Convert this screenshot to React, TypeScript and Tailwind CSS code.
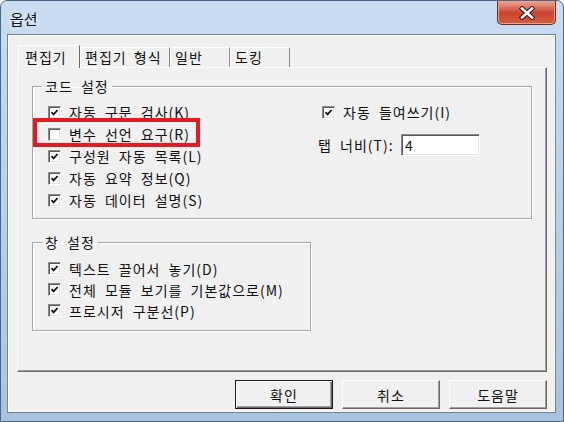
import type { ReactNode } from 'react'

const font = "font-['Noto_Sans_CJK_KR','Noto_Sans',sans-serif]"

function Check({ checked }: { checked: boolean }) {
  return (
    <span className="flex h-[13px] w-[13px] shrink-0 items-center justify-center border border-t-[#8a8a8a] border-l-[#8a8a8a] border-b-white border-r-white bg-white shadow-[inset_1px_1px_0_#5a5a5a,inset_-1px_-1px_0_#e3e3e3]">
      {checked && (
        <svg width="9" height="9" viewBox="0 0 9 9">
          <path d="M1.5 4.2 L3.6 6.4 L7.6 2" fill="none" stroke="#111" strokeWidth="1.8" />
        </svg>
      )}
    </span>
  )
}

function CheckRow({ label, checked = true, h = 'h-[22px]', children }: { label: string; checked?: boolean; h?: string; children?: ReactNode }) {
  return (
    <div className={`relative flex items-center gap-[8px] ${h}`}>
      <Check checked={checked} />
      <span className="text-[14px] leading-none tracking-[1px] text-[#111] [word-spacing:4px]">{label}</span>
      {children}
    </div>
  )
}

function Tab({ label, selected, w }: { label: string; selected?: boolean; w: string }) {
  if (selected) {
    return (
      <div className={`relative z-10 -mb-[1px] flex h-[23px] items-start border-l border-t border-r border-l-white border-t-white border-r-[#696969] bg-[#f0f0f0] pl-[6px] pt-[3px] ${w}`}>
        <span className="text-[14px] leading-[16px] tracking-[1px]">{label}</span>
      </div>
    )
  }
  return (
    <div className={`flex h-[20px] items-start border-l border-t border-r border-l-white border-t-white border-r-[#8a8a8a] pl-[4px] pt-[1px] ${w}`}>
      <span className="text-[14px] leading-[16px] tracking-[1px] [word-spacing:3px]">{label}</span>
    </div>
  )
}

function Button({ label, primary }: { label: string; primary?: boolean }) {
  return (
    <div
      className={`flex h-[29px] w-[98px] items-center justify-center border bg-[#f0f0f0] text-[14px] leading-none tracking-[1px] ${
        primary
          ? 'border-[#1a1a1a] shadow-[inset_1px_1px_0_#fff,inset_-1px_-1px_0_#696969,inset_-2px_-2px_0_#a0a0a0]'
          : 'border-t-white border-l-white border-r-[#696969] border-b-[#696969] shadow-[inset_-1px_-1px_0_#a0a0a0]'
      }`}
    >
      {label}
    </div>
  )
}

export default function App() {
  return (
    <div className={`${font} flex h-[422px] w-[564px] flex-col overflow-hidden rounded-t-[7px] border border-[#4f6786] bg-gradient-to-b from-[#c9dcf1] via-[#b9d0ea] to-[#a9c2de] text-[#111]`}>
      {/* title bar */}
      <div className="flex h-[33px] shrink-0 items-start justify-between pl-[9px] pr-[7px]">
        <span className="pt-[10px] text-[15px] leading-[16px] [text-shadow:0_0_6px_#fff]">옵션</span>
        <div className="flex h-[24px] w-[59px] items-center justify-center rounded-b-[5px] border border-t-0 border-[#6b2c22] bg-gradient-to-b from-[#e9a795] via-[#c9452f] to-[#d65c40] shadow-[inset_0_0_0_1px_#eba08c]">
          <svg width="18" height="14" viewBox="0 0 18 14">
            <path d="M4 2.5 L14 11.5 M14 2.5 L4 11.5" stroke="#3a1510" strokeWidth="4.6" strokeLinecap="square" />
            <path d="M4 2.5 L14 11.5 M14 2.5 L4 11.5" stroke="#fff" strokeWidth="2.6" strokeLinecap="square" />
          </svg>
        </div>
      </div>

      {/* client area */}
      <div className="ml-[6px] mr-[7px] flex h-[379px] flex-col border border-[#6c83a0] bg-[#f0f0f0] pl-[9px] pr-[8px] pt-[9px] shadow-[inset_0_0_0_1px_#fff]">
        {/* tabs */}
        <div className="flex h-[23px] items-end pl-[1px]">
          <Tab label="편집기" selected w="w-[62px]" />
          <Tab label="편집기 형식" w="w-[90px]" />
          <Tab label="일반" w="w-[60px]" />
          <Tab label="도킹" w="w-[60px]" />
        </div>

        {/* panel */}
        <div className="h-[305px] w-[530px] border border-t-white border-l-white border-r-[#696969] border-b-[#696969] pl-[14px] pt-[10px] shadow-[inset_-1px_-1px_0_#a0a0a0]">
          <fieldset className="h-[141px] w-[500px] border border-[#a6a6a6] pl-[15px] pt-[7px] shadow-[inset_1px_1px_0_#fff,1px_1px_0_#fff]">
            <legend className="ml-[-6px] px-[3px] text-[14px] leading-[16px] tracking-[1px] [word-spacing:4px]">코드 설정</legend>
            <div className="flex">
              <div className="w-[274px]">
                <CheckRow label="자동 구문 검사(K)" />
                <CheckRow label="변수 선언 요구(R)" checked={false}>
                  <span className="absolute left-[-15px] top-[-5px] h-[29px] w-[167px] border-4 border-[#e31b23]" />
                </CheckRow>
                <CheckRow label="구성원 자동 목록(L)" />
                <CheckRow label="자동 요약 정보(Q)" />
                <CheckRow label="자동 데이터 설명(S)" />
              </div>
              <div className="flex flex-col">
                <CheckRow label="자동 들여쓰기(I)" />
                <div className="-ml-[4px] mt-[11px] flex h-[22px] items-center">
                  <span className="w-[83px] text-[14px] leading-none tracking-[1px] [word-spacing:4px]">탭 너비(T):</span>
                  <div className="flex h-[22px] w-[79px] items-center border border-t-[#8a8a8a] border-l-[#8a8a8a] border-b-white border-r-white bg-white pl-[3px] text-[14px] leading-none shadow-[inset_1px_1px_0_#5a5a5a,inset_-1px_-1px_0_#e3e3e3]">
                    4
                  </div>
                </div>
              </div>
            </div>
          </fieldset>

          <fieldset className="mt-[15px] h-[97px] w-[279px] border border-[#a6a6a6] pl-[15px] pt-[8px] shadow-[inset_1px_1px_0_#fff,1px_1px_0_#fff]">
            <legend className="ml-[-6px] px-[3px] text-[14px] leading-[16px] tracking-[1px] [word-spacing:4px]">창 설정</legend>
            <CheckRow label="텍스트 끌어서 놓기(D)" h="h-[21px]" />
            <CheckRow label="전체 모듈 보기를 기본값으로(M)" h="h-[21px]" />
            <CheckRow label="프로시저 구분선(P)" h="h-[21px]" />
          </fieldset>
        </div>

        {/* buttons */}
        <div className="mt-[8px] flex w-[530px] justify-end gap-[9px]">
          <Button label="확인" primary />
          <Button label="취소" />
          <Button label="도움말" />
        </div>
      </div>
    </div>
  )
}
